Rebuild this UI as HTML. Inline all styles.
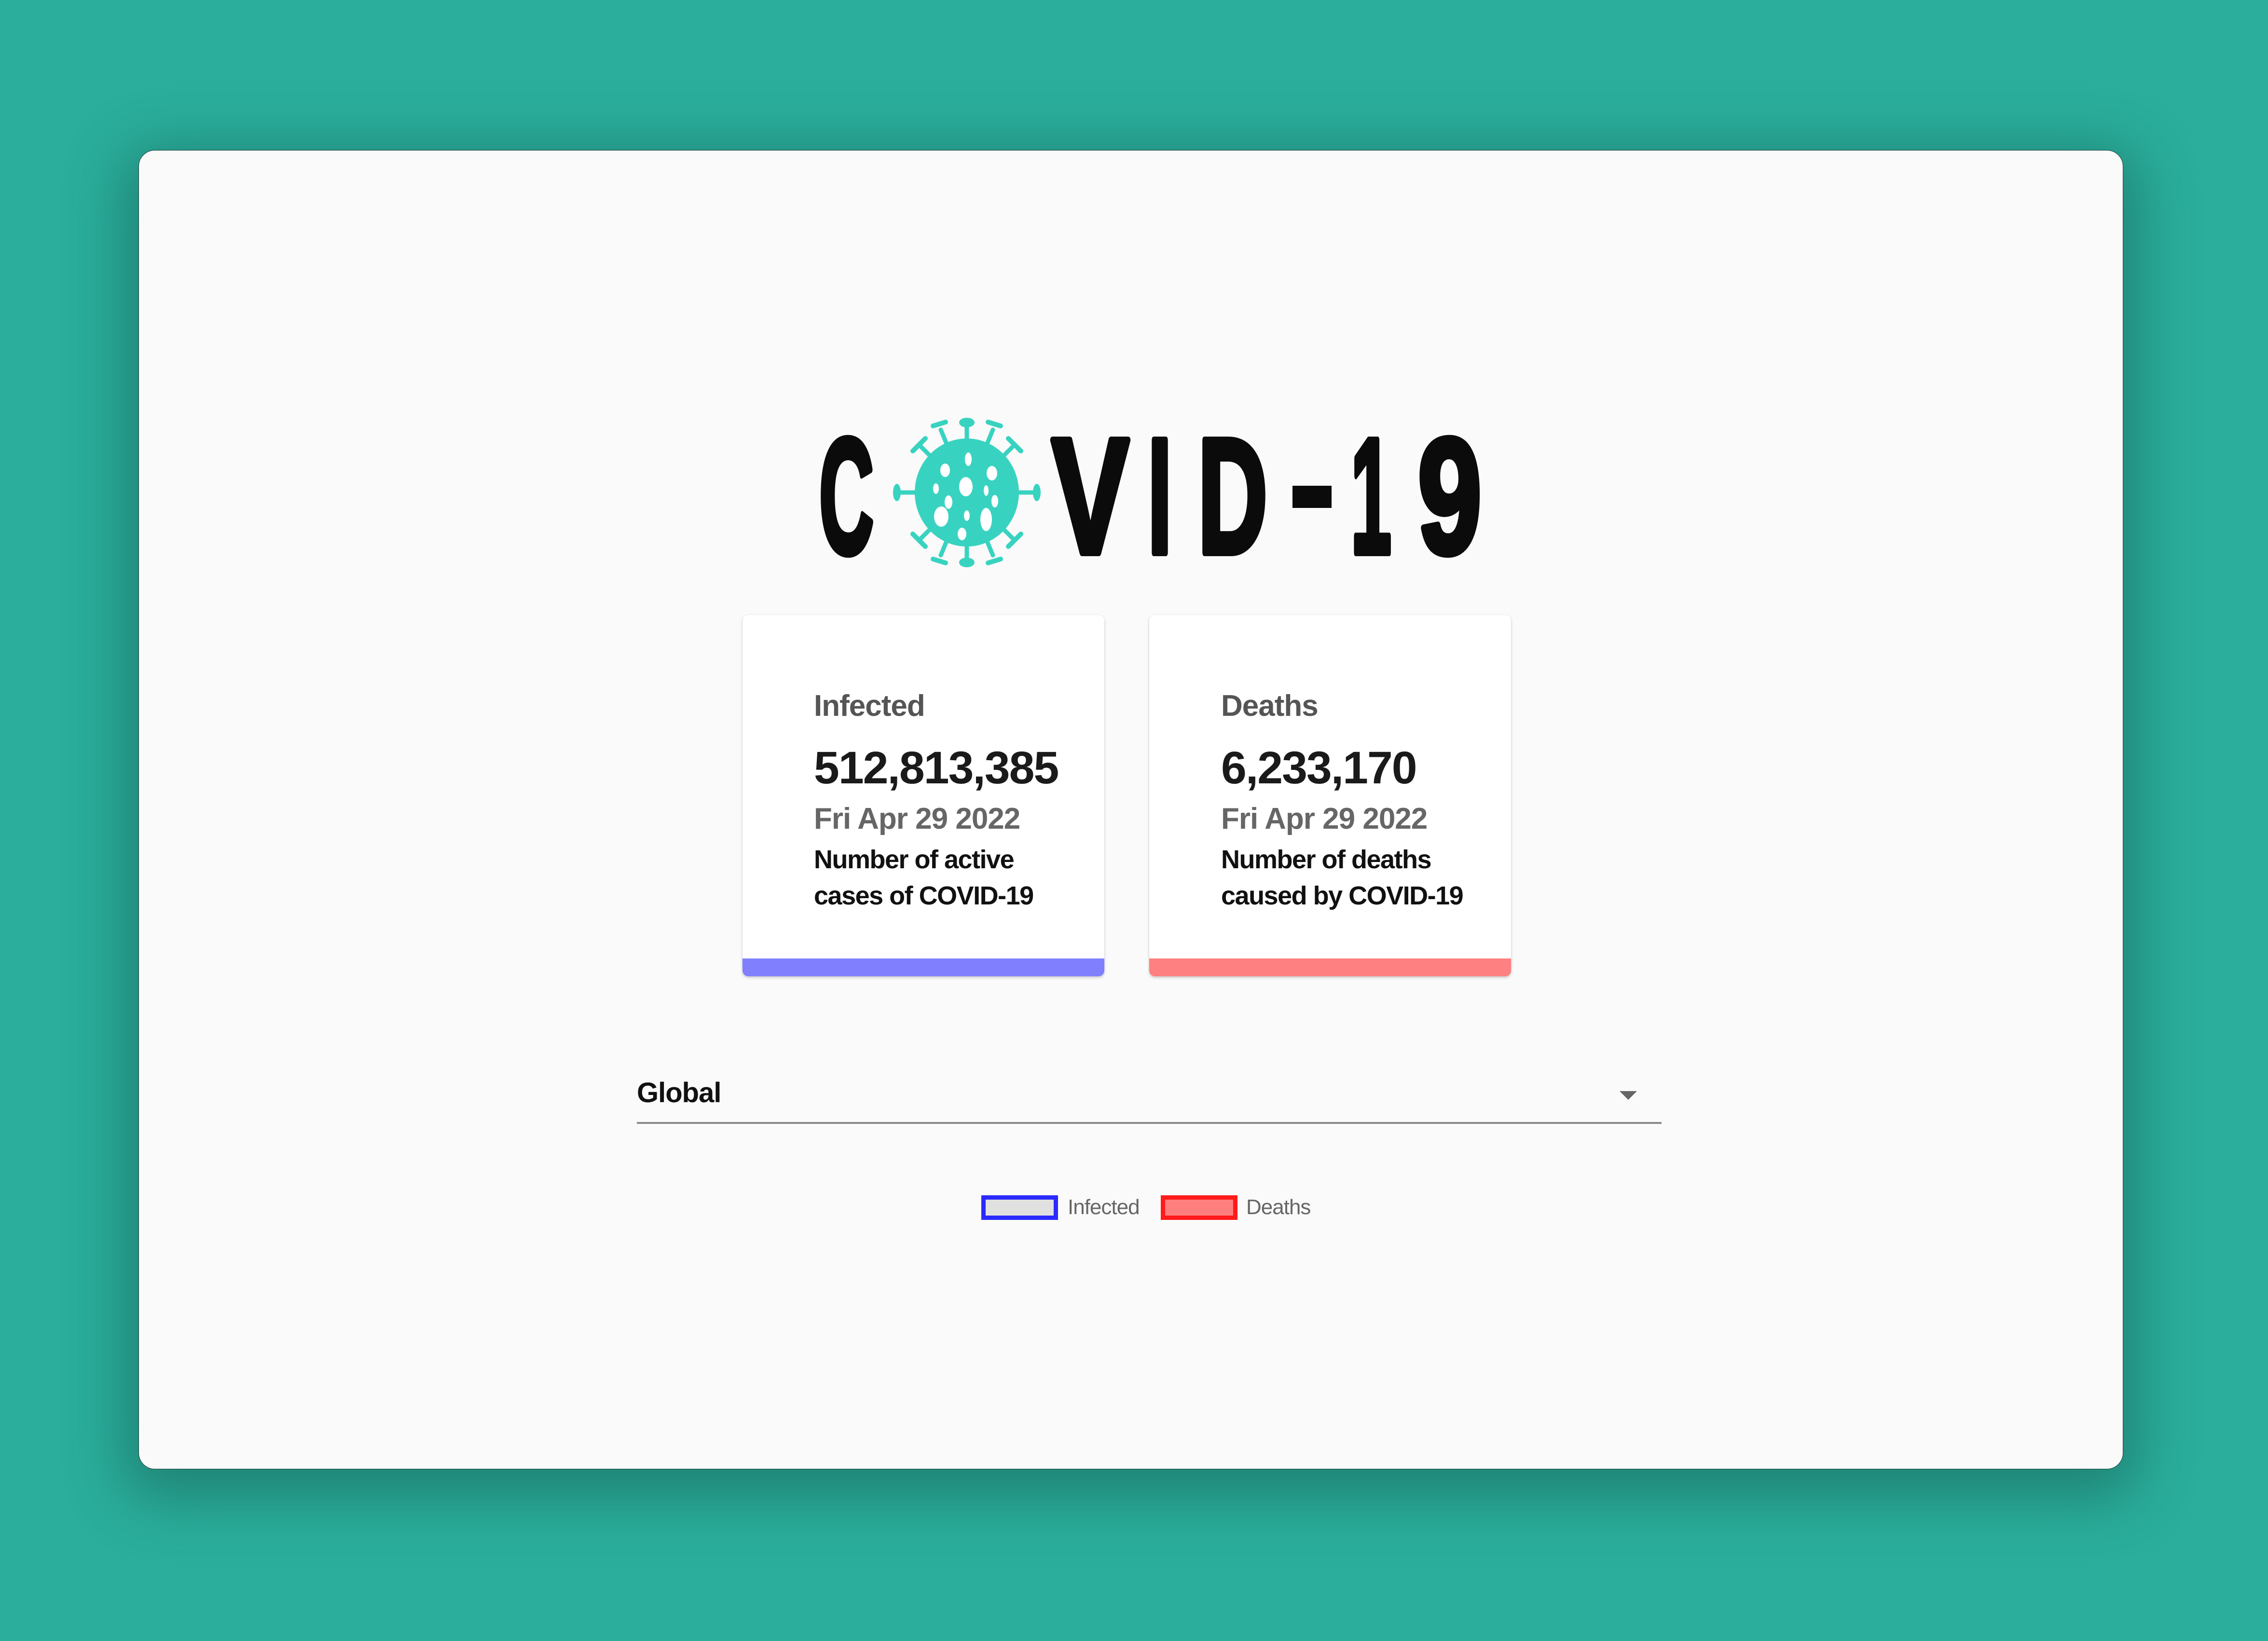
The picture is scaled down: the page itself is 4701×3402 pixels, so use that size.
<!DOCTYPE html>
<html><head><meta charset="utf-8"><style>
html,body{margin:0;padding:0;}
body{width:4701px;height:3402px;background:#2bae9c;position:relative;overflow:hidden;font-family:"Liberation Sans",sans-serif;}
.win{position:absolute;left:287px;top:311px;width:4114px;height:2735px;background:#fafafa;border-radius:34px;box-shadow:0 30px 120px 30px rgba(15,80,70,0.45);border:1px solid #1c3b36;box-sizing:border-box;}
.card{position:absolute;top:1275px;width:750px;height:749px;background:#fff;border-radius:12px;box-shadow:0 3px 6px rgba(0,0,0,0.18),0 0 3px rgba(0,0,0,0.08);overflow:hidden;}
.card .bar{position:absolute;left:0;right:0;bottom:0;height:37px;}
.t{position:absolute;left:150px;white-space:nowrap;font-weight:bold;}
.title{top:1428px;font-size:62px;color:#555;letter-spacing:-1px;}
.num{top:1538px;font-size:95px;color:#1a1a1a;letter-spacing:-2px;}
.date{top:1662px;font-size:62px;color:#666;letter-spacing:-1px;}
.d1{top:1745px;font-size:54px;color:#111;letter-spacing:-1.5px;line-height:75px;}
</style></head><body>
<div class="win"></div>
<svg width="4701" height="3402" style="position:absolute;left:0;top:0">
 <g font-family="Liberation Sans" font-weight="bold" font-size="340" fill="#0b0b0b" stroke="#0b0b0b" stroke-width="14" stroke-linejoin="round">
 <text x="1698" y="1146" textLength="113" lengthAdjust="spacingAndGlyphs">C</text>
 <text x="2180" y="1146" textLength="160" lengthAdjust="spacingAndGlyphs">V</text>
 <text x="2379" y="1146" textLength="50" lengthAdjust="spacingAndGlyphs">I</text>
 <text x="2483" y="1146" textLength="144" lengthAdjust="spacingAndGlyphs">D</text>
 <text x="2800" y="1146" textLength="84" lengthAdjust="spacingAndGlyphs">1</text>
 <text x="2939" y="1146" textLength="132" lengthAdjust="spacingAndGlyphs">9</text>
 </g>
 <rect x="2679" y="1007" width="81" height="46" fill="#0b0b0b"/>
 <g transform="translate(2004,1021)" fill="#38d3c0" stroke="#38d3c0">
  <g stroke-width="9" stroke-linecap="round">
   <line x1="0" y1="0" x2="0" y2="-140"/><line x1="0" y1="0" x2="0" y2="140"/>
   <line x1="0" y1="0" x2="-140" y2="0"/><line x1="0" y1="0" x2="140" y2="0"/>
   <line x1="0" y1="0" x2="-99" y2="-99"/><line x1="0" y1="0" x2="99" y2="-99"/>
   <line x1="0" y1="0" x2="-99" y2="99"/><line x1="0" y1="0" x2="99" y2="99"/>
   <line x1="0" y1="0" x2="-54" y2="-130"/><line x1="0" y1="0" x2="54" y2="-130"/>
   <line x1="0" y1="0" x2="-54" y2="130"/><line x1="0" y1="0" x2="54" y2="130"/>
  </g>
  <g stroke="none">
   <ellipse cx="0" cy="-145" rx="16" ry="10"/><ellipse cx="0" cy="145" rx="16" ry="10"/>
   <ellipse cx="-145" cy="0" rx="8" ry="18"/><ellipse cx="145" cy="0" rx="8" ry="18"/>
  </g>
  <g stroke-width="10" stroke-linecap="round" fill="none">
   <line x1="-112" y1="-86" x2="-86" y2="-112"/><line x1="112" y1="-86" x2="86" y2="-112"/>
   <line x1="-112" y1="86" x2="-86" y2="112"/><line x1="112" y1="86" x2="86" y2="112"/>
   <line x1="-70" y1="-138" x2="-44" y2="-146"/><line x1="70" y1="-138" x2="44" y2="-146"/>
   <line x1="-70" y1="138" x2="-44" y2="146"/><line x1="70" y1="138" x2="44" y2="146"/>
  </g>
  <ellipse cx="0" cy="0" rx="108" ry="112" stroke="none"/>
  <g fill="#fff" stroke="none">
   <ellipse cx="3" cy="-69" rx="7" ry="14"/>
   <ellipse cx="-45" cy="-46" rx="10" ry="14"/>
   <ellipse cx="52" cy="-40" rx="11" ry="15"/>
   <ellipse cx="-2" cy="-12" rx="14" ry="20"/>
   <ellipse cx="-64" cy="-8" rx="6" ry="11"/>
   <ellipse cx="40" cy="-4" rx="5" ry="11"/>
   <ellipse cx="-38" cy="20" rx="8" ry="14"/>
   <ellipse cx="58" cy="18" rx="7" ry="13"/>
   <ellipse cx="0" cy="48" rx="6" ry="11"/>
   <ellipse cx="-53" cy="50" rx="15" ry="21"/>
   <ellipse cx="40" cy="56" rx="12" ry="24"/>
   <ellipse cx="-10" cy="86" rx="9" ry="13"/>
  </g>
 </g>
</svg>
<div class="card" style="left:1539px"><div class="bar" style="background:#8080ff"></div></div>
<div class="card" style="left:2382px"><div class="bar" style="background:#ff8080"></div></div>
<div class="t title" style="left:1687px">Infected</div>
<div class="t num" style="left:1687px">512,813,385</div>
<div class="t date" style="left:1687px">Fri Apr 29 2022</div>
<div class="t d1" style="left:1687px">Number of active<br>cases of COVID-19</div>
<div class="t title" style="left:2531px">Deaths</div>
<div class="t num" style="left:2531px">6,233,170</div>
<div class="t date" style="left:2531px">Fri Apr 29 2022</div>
<div class="t d1" style="left:2531px">Number of deaths<br>caused by COVID-19</div>
<div style="position:absolute;left:1320px;top:2232px;font-size:58px;font-weight:bold;color:#111;letter-spacing:-1px">Global</div>
<div style="position:absolute;left:3357px;top:2262px;width:0;height:0;border-left:18px solid transparent;border-right:18px solid transparent;border-top:18px solid #666"></div>
<div style="position:absolute;left:1320px;top:2326px;width:2124px;height:4px;background:#8a8a8a"></div>
<div style="position:absolute;left:2034px;top:2478px;width:159px;height:51px;box-sizing:border-box;border:9px solid #2a2aff;background:#e0e0e0"></div>
<div style="position:absolute;left:2213px;top:2478px;font-size:44px;color:#666;letter-spacing:-1px">Infected</div>
<div style="position:absolute;left:2406px;top:2478px;width:159px;height:51px;box-sizing:border-box;border:9px solid #ff1a1a;background:#ff7f7f"></div>
<div style="position:absolute;left:2583px;top:2478px;font-size:44px;color:#666;letter-spacing:-1px">Deaths</div>
</body></html>
